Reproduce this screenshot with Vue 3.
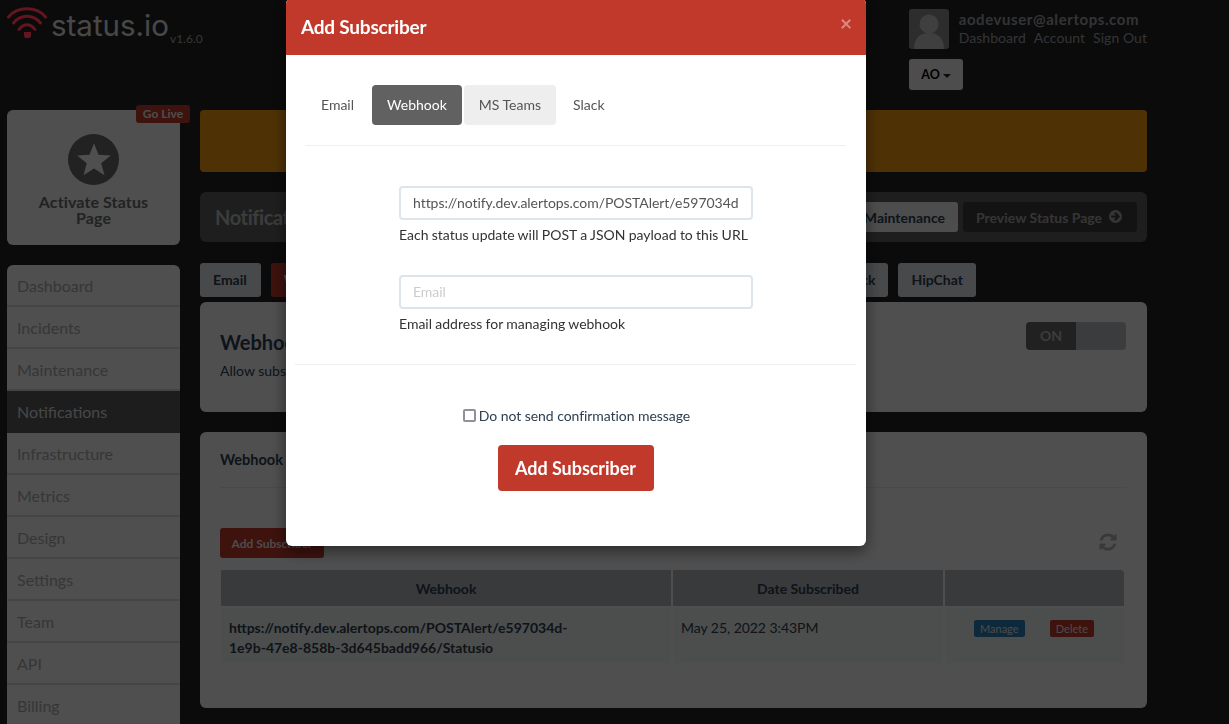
<template>
  <div class="page">
    <header class="top">
      <div class="brand">
        <svg class="wifi" viewBox="0 0 40 32" width="40" height="32">
          <path d="M1.5 10 C10 -1 30 -1 38.5 10" />
          <path d="M6.5 16 C14 7 26 7 33.5 16" />
          <path d="M12 22.5 C16.5 16 23.500 16 28 22.5" />
          <path class="wifi-foot" d="M17 25 h7 v3.500 l-1 2.500 h-5 l-1 -2.500 z" />
        </svg>
        <span class="brand-name">status.io</span>
        <span class="brand-version">v1.6.0</span>
      </div>
      <div class="account">
        <div class="account-row">
          <div class="avatar">
            <svg viewBox="0 0 40 40" width="40" height="40">
              <circle cx="20" cy="15" r="9.5" />
              <path d="M5 40 C5 28 12 24 20 24 C28 24 35 28 35 40 Z" />
            </svg>
          </div>
          <div>
            <div class="account-email">aodevuser@alertops.com</div>
            <div class="account-links">
              <span v-for="link in accountLinks" :key="link">{{ link }}</span>
            </div>
          </div>
        </div>
        <button class="org-btn">AO<i class="caret"></i></button>
      </div>
    </header>

    <div class="columns">
      <aside class="side">
        <div class="activate">
          <span class="go-live">Go Live</span>
          <div class="star-circle">
            <svg viewBox="0 0 24 24" width="36" height="36">
              <path d="M12 1.500 L15 9.200 L23.200 9.600 L16.800 14.800 L19 22.800 L12 18.300 L5 22.800 L7.200 14.800 L0.800 9.600 L9 9.200 Z" />
            </svg>
          </div>
          <div class="activate-label">Activate Status Page</div>
        </div>
        <nav class="nav">
          <a v-for="item in navItems" :key="item" :class="['nav-item', { active: item === 'Notifications' }]">{{ item }}</a>
        </nav>
      </aside>

      <main class="main">
        <div class="banner"></div>

        <div class="title-bar">
          <h1>Notifications</h1>
          <div class="title-actions">
            <button class="btn-light">Schedule Maintenance</button>
            <button class="btn-dark">
              Preview Status Page
              <svg viewBox="0 0 1792 1792" width="15" height="15">
                <path d="M1413 896q0-27-18-45l-91-91-362-362q-18-18-45-18t-45 18l-91 91q-18 18-18 45t18 45l189 189h-502q-26 0-45 19t-19 45v128q0 26 19 45t45 19h502l-189 189q-19 19-19 45t19 45l91 91q18 18 45 18t45-18l362-362 91-91q18-18 18-45zm251 0q0 209-103 385.500t-279.500 279.500-385.500 103-385.500-103-279.500-279.500-103-385.500 103-385.500 279.500-279.500 385.500-103 385.500 103 279.500 279.500 103 385.500z" />
              </svg>
            </button>
          </div>
        </div>

        <div class="channels">
          <a class="channel">Email</a>
          <a class="channel selected">Webhook</a>
          <a class="channel channel-push">Slack</a>
          <a class="channel">HipChat</a>
        </div>

        <section class="card card-intro">
          <div>
            <h2>Webhook Subscribers</h2>
            <p>Allow subscribers to receive status updates by webhook</p>
          </div>
          <div class="toggle"><span class="toggle-on">ON</span><span class="toggle-off"></span></div>
        </section>

        <section class="card card-list">
          <h3>Webhook Subscribers</h3>
          <div class="list-tools">
            <button class="btn-add">Add Subscriber</button>
            <svg class="refresh" viewBox="0 0 1792 1792" width="20" height="20">
              <path d="M1639 1056q0 5-1 7-64 268-268 434.500t-478 166.500q-146 0-282.500-55t-243.500-157l-129 129q-19 19-45 19t-45-19-19-45v-448q0-26 19-45t45-19h448q26 0 45 19t19 45-19 45l-137 137q71 66 161 102t187 36q134 0 250-65t186-179q11-17 53-117 8-23 30-23h192q13 0 22.500 9.500t9.500 22.500zm25-800v448q0 26-19 45t-45 19h-448q-26 0-45-19t-19-45 19-45l138-138q-148-137-349-137-134 0-250 65t-186 179q-11 17-53 117-8 23-30 23h-199q-13 0-22.500-9.500t-9.500-22.500v-7q65-268 270-434.500t480-166.500q146 0 284 55.500t245 156.500l130-129q19-19 45-19t45 19 19 45z" />
            </svg>
          </div>
          <table class="subs">
            <thead>
              <tr>
                <th class="col-url">Webhook</th>
                <th class="col-date">Date Subscribed</th>
                <th></th>
              </tr>
            </thead>
            <tbody>
              <tr>
                <td class="cell-url">https://notify.dev.alertops.com/POSTAlert/e597034d-<br />1e9b-47e8-858b-3d645badd966/Statusio</td>
                <td>May 25, 2022 3:43PM</td>
                <td class="cell-actions">
                  <span class="tag tag-blue">Manage</span>
                  <span class="tag tag-red">Delete</span>
                </td>
              </tr>
            </tbody>
          </table>
        </section>
      </main>
    </div>

    <div class="backdrop"></div>

    <div class="modal">
      <div class="modal-head">
        <span>Add Subscriber</span>
        <span class="modal-close">×</span>
      </div>
      <div class="modal-tabs">
        <a v-for="tab in modalTabs" :key="tab" :class="['modal-tab', { current: tab === 'Webhook', hovered: tab === 'MS Teams' }]">{{ tab }}</a>
      </div>
      <div class="modal-form">
        <input class="field" type="text" value="https://notify.dev.alertops.com/POSTAlert/e597034d-1e9b-47e8-858b-3d645badd966/Statusio" />
        <p class="hint">Each status update will POST a JSON payload to this URL</p>
        <input class="field field-second" type="text" placeholder="Email" />
        <p class="hint">Email address for managing webhook</p>
      </div>
      <div class="modal-foot">
        <label class="confirm"><input type="checkbox" />Do not send confirmation message</label>
        <button class="btn-submit">Add Subscriber</button>
      </div>
    </div>
  </div>
</template>

<script setup>
const accountLinks = ['Dashboard', 'Account', 'Sign Out']

const navItems = [
  'Dashboard', 'Incidents', 'Maintenance', 'Notifications', 'Infrastructure',
  'Metrics', 'Design', 'Settings', 'Team', 'API', 'Billing'
]

const modalTabs = ['Email', 'Webhook', 'MS Teams', 'Slack']
</script>

<style>
html, body {
  margin: 0;
  overflow: hidden;
  background: #222;
}
</style>

<style scoped>
.page {
  position: relative;
  height: 724px;
  overflow: hidden;
  padding-left: 7px;
  box-sizing: border-box;
  background: #222;
  color: #2c3e50;
  font-family: Lato, "Liberation Sans", sans-serif;
  font-size: 14px;
}

h1, h2, h3, p {
  margin: 0;
}

button {
  font-family: inherit;
  border: none;
}

/* top header */
.top {
  display: flex;
  justify-content: space-between;
  width: 1140px;
  height: 110px;
}

.brand {
  display: flex;
  align-items: flex-start;
  padding-top: 7px;
}

/* logo keeps its strong red through the backdrop */
.wifi {
  position: relative;
  z-index: 1;
}

.wifi path {
  fill: none;
  stroke: #641520;
  stroke-width: 3;
  stroke-linecap: round;
}

.wifi .wifi-foot {
  fill: #641520;
  stroke: none;
}

.brand-name {
  margin-left: 4px;
  font-family: Inter, sans-serif;
  font-size: 29.500px;
  line-height: 36px;
  color: #e0e0e0;
}

.brand-version {
  margin-left: 1px;
  margin-top: 25px;
  font-size: 12px;
  line-height: 14px;
  color: #aaa;
}

.account {
  padding-top: 9px;
  width: 238px;
}

.account-row {
  display: flex;
  gap: 10px;
}

.avatar {
  width: 40px;
  height: 40px;
  border-radius: 3px;
  overflow: hidden;
  background: #8c8c8c;
}

.avatar svg {
  display: block;
  fill: #c4c4c4;
}

.account-email {
  font-size: 15px;
  font-weight: 700;
  line-height: 20px;
  letter-spacing: 0.570px;
  color: #9ea3aa;
}

.account-links {
  display: flex;
  gap: 8px;
  line-height: 18px;
  letter-spacing: 0.050px;
  white-space: nowrap;
  color: #9ea3aa;
}

.org-btn {
  display: block;
  margin-top: 10px;
  width: 54px;
  height: 31px;
  border-radius: 3px;
  background: #f0f0f0;
  color: #000;
  font-size: 12.500px;
  font-weight: 700;
}

.caret {
  display: inline-block;
  margin-left: 3px;
  vertical-align: middle;
  border-top: 4px solid #222;
  border-left: 4px solid transparent;
  border-right: 4px solid transparent;
}

/* columns */
.columns {
  display: flex;
  gap: 20px;
}

.side {
  width: 173px;
  flex: none;
}

.activate {
  position: relative;
  height: 135px;
  box-sizing: border-box;
  padding-top: 24px;
  border-radius: 6px;
  background: #f5f5f5;
  text-align: center;
}

.go-live {
  position: absolute;
  top: -5px;
  right: -10px;
  width: 54px;
  height: 18px;
  border-radius: 3px;
  background: #c0392b;
  color: #f0f0f0;
  font-size: 12px;
  font-weight: 700;
  line-height: 18px;
}

.star-circle {
  display: flex;
  align-items: center;
  justify-content: center;
  width: 51px;
  height: 51px;
  margin: 0 auto;
  border-radius: 50%;
  background: #6a6a6a;
}

.star-circle svg {
  fill: #f5f5f5;
  margin-top: -2px;
}

.activate-label {
  margin: 9px 20px 0;
  font-size: 16px;
  font-weight: 700;
  line-height: 16px;
  letter-spacing: 0.120px;
  color: #6a6a6a;
}

.nav {
  display: flex;
  flex-direction: column;
  margin-top: 20px;
  border-radius: 6px 6px 0 0;
  overflow: hidden;
}

.nav-item {
  height: 40px;
  padding-left: 10px;
  border-bottom: 2px solid #d5d5d5;
  background: #f5f5f5;
  color: #a9a9a9;
  font-size: 16px;
  line-height: 42px;
}

.nav-item.active {
  background: #5a5a5a;
  border-bottom-color: #5a5a5a;
  color: #ddd;
}

/* main */
.main {
  width: 947px;
  flex: none;
}

.banner {
  height: 62px;
  border-radius: 4px;
  background: #f39c12;
}

.title-bar {
  display: flex;
  justify-content: space-between;
  align-items: center;
  height: 50px;
  margin-top: 20px;
  padding: 0 10px 0 15px;
  border-radius: 6px;
  background: #5f5f5f;
}

.title-bar h1 {
  font-size: 20px;
  font-weight: 700;
  letter-spacing: -0.400px;
  color: #bbb;
}

.title-actions {
  display: flex;
  gap: 5px;
}

.btn-light, .btn-dark {
  height: 30px;
  padding: 0 13px;
  border-radius: 3px;
  font-size: 14px;
  font-weight: 700;
}

.btn-light {
  background: #f0f0f0;
  color: #2c3e50;
}

.btn-dark {
  width: 174px;
  background: #3d3d3d;
  color: #a5a5a5;
  text-align: left;
  white-space: nowrap;
}

.btn-dark svg {
  margin-left: 2px;
  vertical-align: -1px;
  fill: #a5a5a5;
}

.channels {
  display: flex;
  gap: 10px;
  width: 776px;
  margin-top: 21px;
}

.channel {
  height: 34px;
  padding: 0 13px;
  border-radius: 3px;
  background: #dfe3e8;
  font-weight: 700;
  line-height: 34px;
}

.channel:first-child {
  padding-right: 14px;
}

.channel.selected {
  background: #c0392b;
  color: #fff;
}

.channel-push {
  margin-left: auto;
}

.card {
  border-radius: 6px;
  background: #f5f5f5;
  box-sizing: border-box;
}

.card-intro {
  display: flex;
  justify-content: space-between;
  height: 110px;
  margin-top: 5px;
  padding: 20px 21px 0 20px;
}

.card-intro h2 {
  margin-top: 9px;
  font-size: 20px;
  line-height: 22px;
  font-weight: 700;
}

.card-intro p {
  margin-top: 9px;
  line-height: 18px;
}

.toggle {
  display: flex;
  width: 100px;
  height: 28px;
  border-radius: 4px;
  overflow: hidden;
}

.toggle-on {
  width: 50px;
  background: #666;
  color: #bbb;
  font-size: 14px;
  font-weight: 700;
  line-height: 28px;
  text-align: center;
}

.toggle-off {
  width: 50px;
  background: #b8bcc1;
}

.card-list {
  height: 276px;
  margin-top: 20px;
  padding: 18px 20px 0;
}

.card-list h3 {
  height: 37px;
  font-size: 14.500px;
  line-height: 20px;
  font-weight: 700;
  border-bottom: 1px solid #e3e3e3;
}

.list-tools {
  display: flex;
  justify-content: space-between;
  align-items: center;
  height: 30px;
  margin-top: 40px;
}

.btn-add {
  width: 104px;
  height: 30px;
  padding: 0;
  border-radius: 3px;
  background: #c0392b;
  color: #e8e8e8;
  font-size: 12px;
  font-weight: 700;
}

.refresh {
  margin: -2px 9px 0 0;
  fill: #b0b0b0;
}

.subs {
  width: 907px;
  margin: 10px 0 0 -1px;
  border-spacing: 2px;
  table-layout: fixed;
}

.subs th {
  height: 36px;
  padding: 0;
  background: #b0b4b9;
  font-size: 14px;
  font-weight: 700;
}

.subs th:last-child {
  border-top-right-radius: 4px;
}

.col-url {
  width: 450px;
}

.col-date {
  width: 270px;
}

.subs td {
  height: 55px;
  box-sizing: border-box;
  padding: 0 8px;
  background: #edf0ee;
  vertical-align: top;
  line-height: 20px;
}

.subs td.cell-url {
  padding-top: 10px;
  font-weight: 700;
}

.subs td:nth-child(2) {
  padding-top: 10px;
  letter-spacing: -0.050px;
}

.subs td.cell-actions {
  display: flex;
  justify-content: space-between;
  padding: 12px 30px 0 29px;
}

.tag {
  height: 17px;
  padding: 0 6px;
  border-radius: 2px;
  color: #e8e8e8;
  font-size: 11px;
  line-height: 17px;
}

.tag-blue {
  background: #2980b9;
}

.tag-red {
  background: #c0392b;
}

/* modal overlay */
.backdrop {
  position: fixed;
  inset: 0;
  background: rgba(0, 0, 0, 0.68);
}

.modal {
  position: fixed;
  top: -2px;
  left: 286px;
  width: 580px;
  height: 548px;
  border-radius: 6px;
  background: #fff;
  box-shadow: 0 5px 15px rgba(0, 0, 0, 0.5);
  overflow: hidden;
}

.modal-head {
  display: flex;
  justify-content: space-between;
  align-items: center;
  height: 57px;
  padding: 2px 14px 2px 15px;
  box-sizing: border-box;
  background: #c0392b;
  color: #fff;
  font-size: 19px;
  font-weight: 700;
  letter-spacing: -0.220px;
}

.modal-close {
  margin-top: -8px;
  font-size: 21px;
  color: #dc8a80;
}

.modal-tabs {
  display: flex;
  gap: 2px;
  margin: 30px 20px 0 19px;
  padding: 0 0 20px 1px;
  border-bottom: 1px solid #ecf0f1;
}

.modal-tab {
  height: 40px;
  padding: 0 15px;
  border-radius: 4px;
  color: #555;
  line-height: 40px;
}

.modal-tab:first-child {
  padding-right: 16px;
}

.modal-tab.current {
  background: #616161;
  color: #fff;
}

.modal-tab.hovered {
  background: #eee;
}

.modal-form {
  padding: 40px 113px 0;
}

.field {
  display: block;
  width: 354px;
  height: 34px;
  box-sizing: border-box;
  padding: 0 12px 2px;
  border: 2px solid #dce4ec;
  border-radius: 4px;
  outline: none;
  color: #555;
  font-family: inherit;
  font-size: 14px;
  letter-spacing: -0.050px;
}

.field::placeholder {
  color: #ccc;
}

.field-second {
  margin-top: 31px;
}

.hint {
  margin-top: 6px;
  line-height: 18px;
  word-spacing: -0.300px;
  color: #333;
}

.modal-foot {
  display: flex;
  flex-direction: column;
  align-items: center;
  margin: 31px 10px 0 9px;
  padding-top: 41px;
  border-top: 1px solid #ecf0f1;
}

.confirm {
  display: flex;
  align-items: center;
  height: 18px;
  margin-bottom: 1px;
  padding-left: 2px;
  letter-spacing: -0.060px;
  color: #2c3e50;
}

.confirm input {
  appearance: none;
  box-sizing: border-box;
  margin: 0 3px 0 0;
  width: 13px;
  height: 13px;
  border: 2px solid #8f8f9d;
  border-radius: 2px;
  background: #fff;
}

.btn-submit {
  width: 156px;
  height: 46px;
  margin-top: 20px;
  border-radius: 4px;
  background: #c0392b;
  color: #fff;
  font-size: 18px;
  font-weight: 700;
  letter-spacing: -0.050px;
}
</style>
